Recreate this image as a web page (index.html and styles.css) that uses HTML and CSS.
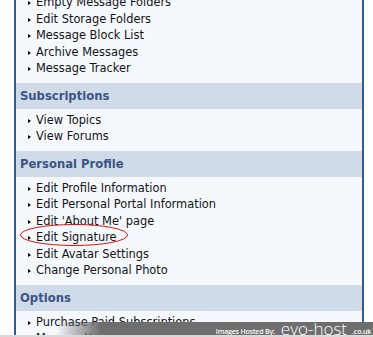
FILE: index.html
```html
<!DOCTYPE html>
<html lang="en">
<head>
  <meta charset="UTF-8" />
  <title>User Control Panel</title>
  <link rel="stylesheet" href="styles.css">
</head>
<body>

  <div class="panel">
    <ul class="links first">
      <li>Empty Message Folders</li>
      <li>Edit Storage Folders</li>
      <li>Message Block List</li>
      <li>Archive Messages</li>
      <li>Message Tracker</li>
    </ul>

    <h3 class="head">Subscriptions</h3>
    <ul class="links">
      <li>View Topics</li>
      <li>View Forums</li>
    </ul>

    <h3 class="head">Personal Profile</h3>
    <ul class="links">
      <li>Edit Profile Information</li>
      <li>Edit Personal Portal Information</li>
      <li>Edit 'About Me' page</li>
      <li>Edit Signature</li>
      <li>Edit Avatar Settings</li>
      <li>Change Personal Photo</li>
    </ul>

    <h3 class="head">Options</h3>
    <ul class="links">
      <li>Purchase Paid Subscriptions</li>
      <li>Manage Your Attachments</li>
    </ul>
  </div>

  <!-- circled by hand -->
  <svg class="circle" width="110" height="24" viewBox="0 0 110 24">
    <ellipse cx="55" cy="12" rx="53.5" ry="10.5" fill="none" stroke="#e01010" stroke-width="1"/>
  </svg>

  <div class="host">
    <span class="small">Images Hosted By:</span>
    <span class="big">evo-host</span>
    <span class="small">.co.uk</span>
  </div>
  <div class="strip"></div>

</body>
</html>
```

FILE: styles.css
```css
body {
  margin: 0;
  background: #fff;
  font-family: "DejaVu Sans", Verdana, sans-serif;
  width: 373px;
  height: 337px;
  overflow: hidden;
  position: relative;
}

.panel {
  margin: -6px 0 0 14px;
  width: 346px;
  background: #f5f8fd;
  border-left: 2px solid #34599a;
  border-right: 2px solid #34599a;
}

.head {
  margin: 0;
  height: 26px;
  line-height: 26px;
  padding-left: 4px;
  background: #cfdbe8;
  color: #3b5486;
  font-size: 11.6px;
  font-weight: bold;
}

.links {
  list-style: none;
  margin: 0;
  padding: 3px 0 6px 0;
}

.links.first {
  padding-top: 0;
}

.links li {
  position: relative;
  height: 16.5px;
  line-height: 16.5px;
  padding-left: 20px;
  font-size: 11.4px;
  color: #141414;
}

/* little black arrow */
.links li::before {
  content: "";
  position: absolute;
  left: 12px;
  top: 7px;
  border-left: 3px solid #000;
  border-top: 2.5px solid transparent;
  border-bottom: 2.5px solid transparent;
}

.circle {
  position: absolute;
  left: 19px;
  top: 223px;
}

.host {
  position: absolute;
  left: 56px;
  right: 0;
  top: 322px;
  height: 13px;
  line-height: 13px;
  overflow: hidden;
  background: linear-gradient(to right, rgba(110,110,110,0), #6e6e6e 45px);
  text-align: right;
  padding-right: 2px;
  white-space: nowrap;
  color: #fff;
  font-family: "Open Sans", sans-serif;
}

.host .small {
  font-size: 7px;
  font-weight: 600;
  letter-spacing: -0.2px;
  vertical-align: 1.5px;
}

.host .big {
  font-size: 17px;
  font-weight: 300;
  margin: 0 1px 0 2px;
}

.strip {
  position: absolute;
  left: 0;
  right: 0;
  top: 335px;
  height: 2px;
  background: #dadada;
}
```
